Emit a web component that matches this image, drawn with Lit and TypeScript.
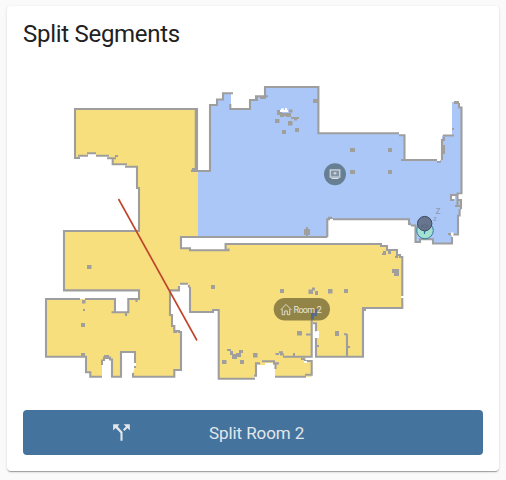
import { LitElement, html, svg, css } from "lit";
import { customElement } from "lit/decorators.js";

const BLUE = "M198 171H210V105H217V99.5H223V93.3H231V109H250V100H256V96.2H265V87H318.4V133.2H399V135.3H404.5V160H442V135.5H452V102H459V108H461V193H458V200H461V210H459V215H458V235H452V243.5H433V239.3H420V242H415.5V225.5H409V219.3H327.3V237H198Z";

const YELLOW = [
  "M75 109H197V171H198V237H181V248.3H190V250.3H226V244H381V246H387V250H397V255H400V257H402.3V308H363V356.7H316V323H312V356.7H305L307 361H311.7V376.7H275V365H259V363H256V375.7H254V378.7H218.7V310H213V312H190V287L188 283.7H181L179 286V290.3H170V315H172V326H174.3V332H181V370H174.3V376.7H133V373L135 367V352H121V376.7H112V361L109 359L107 356L104 359L102 362V376.7H90.3V372.3H86V356.7H46V299H115V312.3H128V299H139V290.3H64V231H139V188H137V166.7H126V164.3H112.7V158H109V155.5H96V153.3H88V155.5H79V158H75Z",
];

const WALLS = [
  // north-west room
  "M75 159V109H197V171M80 158H75M78 155.7H88M87 153.3H96M96 155.7H109M107 158.2H116M115 156H118M112.7 158V164.3H127M125 166.7H137V188H139V231H64V290.4H139V299H129",
  "M191.5 170.2H197M195.8 110V168",
  // south-west room
  "M136.5 300V302M129 299H128.3V312.3H111.5M126 313V316M115 312V299H85M80 299H46V356.7H86V372.3H90.3V376.7H102M102 365V360.5H104V357.5H110V359.5H112V376.7H121V352H135V364M133 373V376.7H174.3V370H181V332H178M177 332H174.3V326H172V315H170V290.4H179V286M180 283.7H188M189 285V287.5M190 287V312H213V310H218.7V378.7H255M254 375.7H257M256 376V363.4H260M262 361.3H275M273 363.4H279M275.5 363V369M275 376.7H306M305 374.8H311.7V361H306",
  // corridor and south-east room
  "M327.3 237H181V248.3H190V250.3H228.5V248.5M225.6 250V244H381V246H387V250H397V255H400V257H402.3V308H363V356.7H316V338M316 332V323.3H313M311.7 312V356.7H283M281 352V354.5H284M275.5 354H279M279 352.3H283",
  "M347 334V356M344 334.2H347M349 346V348M363 310H366M306 334.5H311M317 346H319",
  // north room
  "M191 171H210V105H217V99.5H223V93.3H233M230.3 104V109H250V100H256V96.2H268M265 96V87H318.4V133.2H399M399 135.3H404.5V160M401 160H437M437 161.8H441M442 160V140H444V137M443 135.5H454M444 145.5V154M454 102.4H459M459 103V107.5H461.5V193.5H457.5V200H461V209M457.5 200V206M456 206H461M459.6 209V215.5H458V234.5H453M457 195H451V200H454M449 234.5H452M452 237V243.5H433V239.3H420V242H415.5V225.5H411M411 224H409V219.3H327.3V237M328 217.8H332",
];

const BLOCKS: number[][] = [
  [87, 265, 4.5, 4], [81, 323, 4, 4], [81, 353, 4, 3.5], [82, 300, 3.5, 3.5], [83, 309, 2, 2], [104, 355, 5, 4], [101, 361, 2, 3], [134, 366, 2, 2], [107, 158, 3, 1], [175, 330, 5, 2],
  [211, 285, 4, 4], [280, 289, 4, 4], [308.5, 289.5, 4.5, 4.5], [312, 287.5, 3, 3], [315, 291, 3, 4], [328, 289, 4.5, 4.5], [344, 289, 4, 4], [297, 331, 5, 4.5], [335, 331, 4, 5], [301, 358, 4, 2], [304, 360, 2, 3],
  [227, 349, 4, 2], [230, 351, 3, 4], [232, 354, 5, 5], [236, 353, 5, 4], [239, 350, 4, 3], [222, 360, 4.5, 4], [240, 360, 4, 4], [253, 353, 4.5, 4.5], [293, 353, 2, 3],
  [382, 253, 4, 2], [383, 251, 3, 2], [388, 251, 3, 3], [395, 256, 3, 2], [392, 269, 7, 4], [394, 273, 3, 3], [397, 272, 2, 4], [364, 309, 2, 2],
  [277, 110, 5, 5], [280, 113, 11, 3], [288, 113, 3, 3], [289, 109.5, 3.5, 3], [280, 115, 4, 2], [286, 115, 5, 2], [275, 119, 4.5, 4], [291, 117, 8, 2], [294, 119, 3, 1.5], [282, 130, 4, 4], [288, 121, 4.5, 4.5], [295, 128, 4, 4], [313, 99, 5, 4],
  [255, 97, 3, 4], [260, 97, 6, 2], [304, 229, 6, 6], [306, 227, 2, 9], [350, 148, 5, 4], [388, 148, 4, 4], [350, 170, 5, 4], [388, 170, 4, 4], [452, 128, 2, 2], [454, 101, 5, 3],
  [442, 145, 3, 3], [443, 150, 2, 4], [455, 205, 4, 2], [448, 233, 3, 2], [192, 168, 4, 3],
];

const GAPS: number[][] = [
  [280, 110, 8, 2], [281, 108.5, 3, 2], [285, 108, 2, 3], [330, 219, 3, 3], [437, 158.5, 3, 2.5], [452, 196, 3, 3], [459, 194.5, 4, 4.5], [451, 232.5, 2.5, 3],
  [401, 296, 3, 2], [315.5, 331, 3.5, 7], [134, 363, 2, 3], [103, 361, 7, 3], [304, 361, 3, 2], [265, 363, 8, 4],
];

const rects = (list: number[][], cls: string) =>
  list.map(([x, y, w, h]) => svg`<rect class=${cls} x=${x} y=${y} width=${w} height=${h}></rect>`);

@customElement("app-root")
export class AppRoot extends LitElement {
  static styles = css`
    :host { display: block; box-sizing: border-box; height: 480px; padding: 6px 7px 9px; background: #fafafa; font-family: Roboto, sans-serif; }
    .card { box-sizing: border-box; height: 465px; padding: 0 16px 16px; display: flex; flex-direction: column; background: #fff; border-radius: 4px; box-shadow: 0 2px 1px -1px rgba(0,0,0,.2), 0 1px 1px rgba(0,0,0,.14), 0 1px 3px rgba(0,0,0,.12); }
    h1 { margin: 0; height: 54px; line-height: 56px; font-size: 24px; font-weight: 400; letter-spacing: -0.012em; color: #212121; white-space: nowrap; }
    .map { display: block; width: 460px; height: 340px; margin-bottom: 10px; }
    .blue { fill: #abc7f8; }
    .yellow { fill: #f7df7d; }
    .wall { fill: none; stroke: #9e9e9e; stroke-width: 2.1; }
    .block { fill: #a09f9b; }
    .gap { fill: #fff; }
    .cut { stroke: #c0442b; stroke-width: 1.6; }
    .label { font: 400 9px Roboto, sans-serif; fill: #e7e4d9; word-spacing: 1px; }
    .sleep { font: 400 10px Roboto, sans-serif; fill: #8f9bb0; }
    .sleep-small { font-size: 8px; }
    .action { border: 0; padding: 0; height: 45px; display: grid; grid-template-columns: 186px auto; justify-content: start; align-items: center; border-radius: 4px; background: #44739e; color: #e3e7eb; font: 400 17px Roboto, sans-serif; letter-spacing: -0.09px; text-align: left; white-space: nowrap; }
    .icon { width: 25px; height: 25px; fill: currentColor; justify-self: center; margin-left: 11px; }
  `;

  render() {
    return html`
      <section class="card">
        <h1>Split Segments</h1>
        <svg class="map" viewBox="23 60 460 340">
          <path class="blue" d=${BLUE}></path>
          ${YELLOW.map((d) => svg`<path class="yellow" d=${d}></path>`)}
          ${WALLS.map((d) => svg`<path class="wall" d=${d}></path>`)}
          ${rects(BLOCKS, "block")}
          ${rects(GAPS, "gap")}
          <rect x="273.7" y="298" width="56.3" height="22.5" rx="11.2" fill="#84783f" fill-opacity=".88"></rect>
          <path d="M315.5 309V314.5H312.5V319.5" fill="none" stroke="#4b6595" stroke-width="2.8" stroke-opacity=".85"></path>
          <circle cx="335" cy="174.3" r="11" fill="#667f93"></circle>
          <rect x="330.2" y="169.9" width="9.6" height="7.2" fill="#8494a5" stroke="#d3dbe3" stroke-width="1.2"></rect>
          <path d="M331.5 178.5H338.5M333.5 173.3H336.5M335 172V174.6" fill="none" stroke="#dce4eb" stroke-width="1"></path>
          <path d="M280.7 309.8L286 304.4L291.3 309.8M282.2 309V314.7H284.7V310.9H287.3V314.7H289.8V309" fill="none" stroke="#e7e4d9" stroke-width=".9"></path>
          <text class="label" x="293.6" y="312.7" textLength="28.2">Room 2</text>
          <circle cx="425" cy="230.5" r="8.3" fill="#a3e1d0" stroke="#357b9d" stroke-width="1"></circle>
          <path d="M424.5 234V231.5L429 228.5" fill="none" stroke="#2977a4" stroke-width="1.2"></path>
          <circle cx="424.7" cy="223.6" r="7.2" fill="#67758e" stroke="#3d465f" stroke-width="1"></circle>
          <path d="M421 226L424.7 224.5L428.4 226L424.7 228Z" fill="none" stroke="#505f7a" stroke-width=".7"></path>
          <text class="sleep" x="435.5" y="213.5">z</text>
          <text class="sleep sleep-small" x="433" y="220.5">z</text>
          <line class="cut" x1="118.5" y1="199" x2="197" y2="340.5"></line>
        </svg>
        <button class="action">
          <svg class="icon" viewBox="0 0 24 24"><path d="M14 4L16.29 6.29L13.41 9.17L14.83 10.59L17.71 7.71L20 10V4M10 4H4V10L6.29 7.71L11 12.41V20H13V11.59L8.29 6.29"></path></svg>
          <span>Split Room 2</span>
        </button>
      </section>`;
  }
}
